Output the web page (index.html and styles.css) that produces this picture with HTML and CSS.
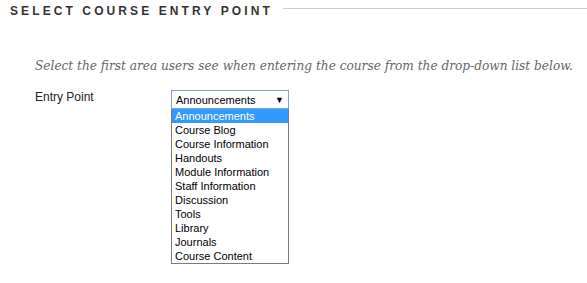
FILE: index.html
```html
<!DOCTYPE html>
<html>
  <head>
    <meta name="viewport" content="width=device-width, initial-scale=1.0" />
    <link rel="stylesheet" href="styles.css">
  </head>
  <body>
    <section class="step">
      <div class="step-title">
        <h2>Select Course Entry Point</h2>
        <span class="rule"></span>
      </div>
      <p class="instructions">Select the first area users see when entering the course from the drop-down list below.</p>
      <div class="field">
        <label class="field-label">Entry Point</label>
        <div class="picker">
          <div class="picker-box">
            <span>Announcements</span>
            <span class="arrow">&#9660;</span>
          </div>
          <ul class="picker-list">
            <li class="selected">Announcements</li>
            <li>Course Blog</li>
            <li>Course Information</li>
            <li>Handouts</li>
            <li>Module Information</li>
            <li>Staff Information</li>
            <li>Discussion</li>
            <li>Tools</li>
            <li>Library</li>
            <li>Journals</li>
            <li>Course Content</li>
          </ul>
        </div>
      </div>
    </section>
  </body>
</html>
```

FILE: styles.css
```css
html {
  height: 100%;
  padding: 0;
  margin: 0;
}
body {
  height: 100%;
  margin: 0;
  padding: 0;
  background-color: white;
  font-family: "Liberation Sans", Arial, sans-serif;
  font-size: 12px;
  color: #222;
}
.step {
  padding: 3px 0 0 10px;
}
.step-title {
  display: flex;
  align-items: flex-start;
}
.step-title h2 {
  margin: 0;
  font-size: 12px;
  font-weight: bold;
  letter-spacing: 3.1px;
  text-transform: uppercase;
  color: #333;
  line-height: 16px;
  white-space: nowrap;
}
.rule {
  flex: 1;
  height: 1px;
  margin: 5px 0 0 10px;
  background-color: #ccc;
}
.instructions {
  margin: 37px 0 0 25px;
  font-family: "DejaVu Serif Condensed", "DejaVu Serif", serif;
  font-stretch: condensed;
  font-style: italic;
  font-size: 13.5px;
  line-height: 18px;
  color: #666;
  white-space: nowrap;
}
.field {
  display: flex;
  margin: 15px 0 0 25px;
}
.field-label {
  width: 136px;
  line-height: 16px;
  color: #222;
}
.picker {
  position: relative;
  width: 118px;
  margin-top: 1px;
  font-size: 11px;
}
.picker-box {
  display: flex;
  justify-content: space-between;
  align-items: center;
  height: 17px;
  border: 1px solid #7da2ce;
  padding: 0 4px 0 4px;
  color: #000;
}
.arrow {
  font-size: 9px;
}
.picker-list {
  position: absolute;
  top: 19px;
  left: 0;
  width: 116px;
  margin: 0;
  padding: 0;
  list-style: none;
  border: 1px solid #7a7a7a;
  border-top: none;
  background: white;
  color: #000;
}
.picker-list li {
  height: 14px;
  line-height: 14px;
  padding-left: 3px;
}
.picker-list .selected {
  background-color: #3399ff;
  color: white;
}
```
